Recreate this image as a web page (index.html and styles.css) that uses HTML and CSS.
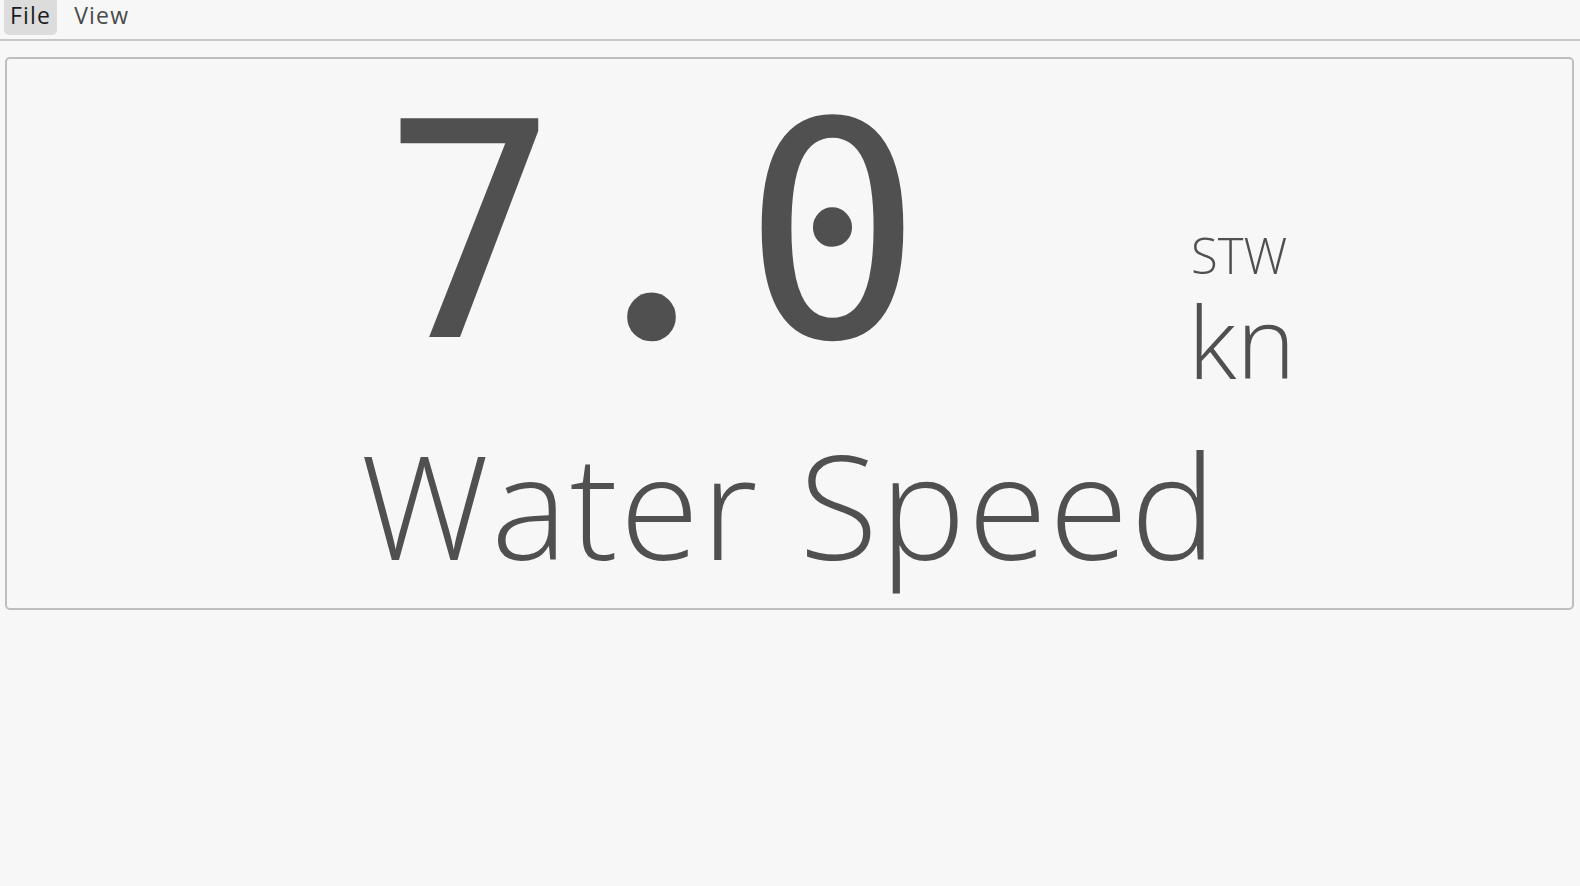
FILE: index.html
```html
<!DOCTYPE html>
<html>
<head>
<meta charset="utf-8">
<link rel="stylesheet" href="styles.css">
</head>
<body>
<div class="menubar">
  <span class="menu-item active">File</span>
  <span class="menu-item">View</span>
</div>
<div class="panel">
  <div class="top-row">
    <div class="value"><span class="ch">7</span><span class="ch dot">.</span><span class="ch">0</span></div>
    <div class="units">
      <div class="source">STW</div>
      <div class="unit">kn</div>
    </div>
  </div>
  <div class="label">Water Speed</div>
</div>
</body>
</html>
```
FILE: styles.css
```css
html, body {
  margin: 0;
  padding: 0;
  background: #f7f7f7;
  font-family: "Open Sans", "Noto Sans", sans-serif;
  color: #505050;
}
.menubar {
  display: flex;
  gap: 11px;
  height: 39px;
  padding-left: 4px;
  border-bottom: 2px solid #c6c6c6;
  box-sizing: content-box;
}
.menu-item {
  font-size: 23px;
  letter-spacing: 1.2px;
  line-height: 31px;
  height: 31px;
  padding: 0 6px 4px 6px;
  color: #4a4a4a;
  border-radius: 0 0 5px 5px;
}
.menu-item.active {
  background: #dcdcdc;
  color: #1c1c1c;
}
.panel {
  margin: 16px 6px 0 5px;
  border: 2px solid #bebebe;
  border-radius: 5px;
  padding: 25px 0 32px 0;
}
.top-row {
  display: flex;
  align-items: flex-start;
  padding-left: 373px;
}
.value {
  font-family: "DejaVu Sans Mono", monospace;
  font-size: 300px;
  line-height: 300px;
  height: 300px;
  width: 543px;
  white-space: nowrap;
}
.ch {
  display: inline-block;
  width: 181px;
  text-align: center;
}
.ch.dot {
  font-family: "Liberation Serif", serif;
  font-weight: 700;
  line-height: 0;
}
.units {
  margin-left: 268px;
  margin-top: 147px;
  display: flex;
  flex-direction: column;
}
.source {
  font-size: 49px;
  line-height: 49px;
  font-weight: 300;
  margin-bottom: 15px;
}
.unit {
  font-size: 100px;
  line-height: 90px;
  font-weight: 300;
  margin-left: -3px;
}
.label {
  margin-top: 47px;
  font-size: 144px;
  line-height: 144px;
  font-weight: 300;
  letter-spacing: 2.2px;
  text-align: center;
  white-space: nowrap;
}
```
